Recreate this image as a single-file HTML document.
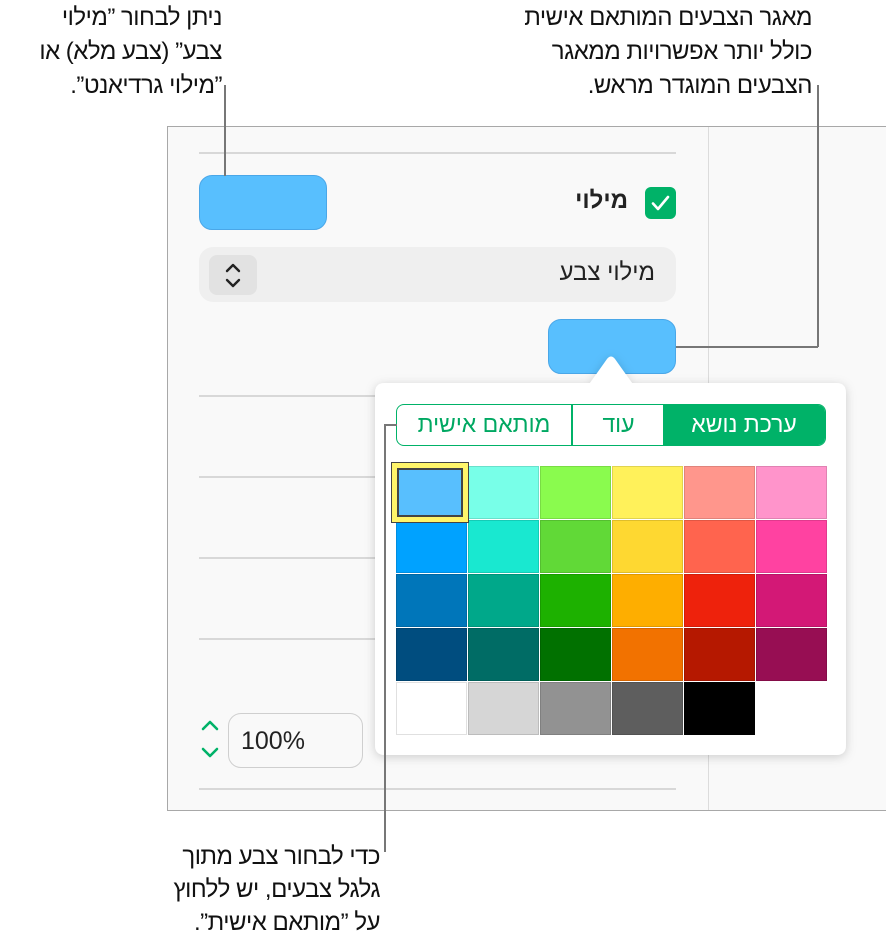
<!DOCTYPE html>
<html><head><meta charset="utf-8"><style>
*{margin:0;padding:0;box-sizing:border-box}
body{width:886px;height:943px;background:#fff;position:relative;overflow:hidden;font-family:"Liberation Sans","Noto Sans CJK SC",sans-serif}
.a{position:absolute}
.cap{position:absolute;direction:rtl;text-align:right;font-size:24px;line-height:34px;color:#111;white-space:nowrap;letter-spacing:-0.5px}
.hl{position:absolute;height:2px;background:#d8d8d8}
.ln{position:absolute;background:#777}
.sw{position:absolute;width:71px;height:53px;border:1px solid rgba(0,0,0,0.12)}
</style></head><body>
<div class="cap" style="right:664px;top:1px">ניתן לבחור ”מילוי<br>צבע” (צבע מלא) או<br>”מילוי גרדיאנט”.</div>
<div class="cap" style="right:74px;top:1px">מאגר הצבעים המותאם אישית<br>כולל יותר אפשרויות ממאגר<br>הצבעים המוגדר מראש.</div>
<div class="cap" style="right:506px;top:840px;line-height:33px">כדי לבחור צבע מתוך<br>גלגל צבעים, יש ללחוץ<br>על ”מותאם אישית”.</div>

<div class="a" style="left:167px;top:126px;width:730px;height:685px;border:1px solid #a8a8a8;background:#f9f9f9"></div>
<div class="a" style="left:708px;top:127px;width:1px;height:683px;background:#dcdcdc"></div>
<div class="hl" style="left:199px;top:152px;width:477px"></div>
<div class="hl" style="left:199px;top:395px;width:200px"></div>
<div class="hl" style="left:199px;top:476px;width:200px"></div>
<div class="hl" style="left:199px;top:557px;width:200px"></div>
<div class="hl" style="left:199px;top:638px;width:200px"></div>
<div class="hl" style="left:199px;top:788px;width:477px"></div>

<div class="a" style="left:199px;top:175px;width:128px;height:55px;background:#58bffe;border:1px solid #4aa7e8;border-radius:13px"></div>
<div class="a" style="left:645px;top:187px;width:31px;height:32px;background:#00b268;border-radius:6px"></div>
<svg class="a" style="left:645px;top:187px" width="31" height="32"><path d="M8 16.5l5 5.5 10-12" fill="none" stroke="#fff" stroke-width="2.6" stroke-linecap="round" stroke-linejoin="round"/></svg>
<div class="a" style="left:540px;top:187px;width:88px;direction:rtl;font-weight:bold;font-size:24px;color:#222;text-align:right">מילוי</div>
<div class="a" style="left:199px;top:247px;width:477px;height:55px;background:#efefef;border-radius:14px"></div>
<div class="a" style="left:209px;top:255px;width:48px;height:40px;background:#e2e2e2;border-radius:8px"></div>
<svg class="a" style="left:209px;top:255px" width="48" height="40"><path d="M18 16l6-6 6 6M18 25l6 6 6-6" fill="none" stroke="#222" stroke-width="2.4" stroke-linecap="round" stroke-linejoin="round"/></svg>
<div class="a" style="left:420px;top:259px;width:235px;direction:rtl;font-size:24px;color:#222;text-align:right">מילוי צבע</div>

<div class="a" style="left:548px;top:319px;width:128px;height:55px;background:#58bffe;border:1px solid #4aa7e8;border-radius:13px"></div>

<svg class="a" style="left:360px;top:345px" width="505" height="430">
<defs><filter id="sh" x="-10%" y="-10%" width="120%" height="125%"><feDropShadow dx="0" dy="2" stdDeviation="5" flood-color="#000" flood-opacity="0.18"/></filter></defs>
<path d="M25 38 H230 L247 14 Q251 9 255 14 L272 38 H476 Q486 38 486 48 V400 Q486 410 476 410 H25 Q15 410 15 400 V48 Q15 38 25 38Z" fill="#fff" filter="url(#sh)"/>
</svg>

<div class="a" style="left:396px;top:404px;width:430px;height:42px;border:1.5px solid #00b268;border-radius:8px;overflow:hidden;background:#fff">
<div class="a" style="right:0;top:0;width:162px;height:100%;background:#00b268;color:#fff;font-size:23px;line-height:39px;text-align:center;direction:rtl">ערכת נושא</div>
<div class="a" style="left:174px;top:0;width:1.5px;height:100%;background:#00b268"></div>
<div class="a" style="left:176px;top:0;width:91px;height:100%;color:#00a862;font-size:23px;line-height:39px;text-align:center;direction:rtl">עוד</div>
<div class="a" style="left:0;top:0;width:174px;height:100%;color:#00a862;font-size:23px;line-height:39px;text-align:center;direction:rtl">מותאם אישית</div>
</div>

<div class="sw" style="left:396px;top:466px;background:#58bffe"></div>
<div class="sw" style="left:468px;top:466px;background:#78ffe8"></div>
<div class="sw" style="left:540px;top:466px;background:#8afb4e"></div>
<div class="sw" style="left:612px;top:466px;background:#fff15a"></div>
<div class="sw" style="left:684px;top:466px;background:#ff968c"></div>
<div class="sw" style="left:756px;top:466px;background:#ff94cb"></div>
<div class="sw" style="left:396px;top:520px;background:#00a2ff"></div>
<div class="sw" style="left:468px;top:520px;background:#19e8d0"></div>
<div class="sw" style="left:540px;top:520px;background:#61d937"></div>
<div class="sw" style="left:612px;top:520px;background:#fed831"></div>
<div class="sw" style="left:684px;top:520px;background:#ff644e"></div>
<div class="sw" style="left:756px;top:520px;background:#ff42a1"></div>
<div class="sw" style="left:396px;top:574px;background:#0076ba"></div>
<div class="sw" style="left:468px;top:574px;background:#00a88a"></div>
<div class="sw" style="left:540px;top:574px;background:#1db100"></div>
<div class="sw" style="left:612px;top:574px;background:#feae00"></div>
<div class="sw" style="left:684px;top:574px;background:#ee220c"></div>
<div class="sw" style="left:756px;top:574px;background:#d31876"></div>
<div class="sw" style="left:396px;top:628px;background:#004d7f"></div>
<div class="sw" style="left:468px;top:628px;background:#006c65"></div>
<div class="sw" style="left:540px;top:628px;background:#017100"></div>
<div class="sw" style="left:612px;top:628px;background:#f27200"></div>
<div class="sw" style="left:684px;top:628px;background:#b51800"></div>
<div class="sw" style="left:756px;top:628px;background:#970e53"></div>
<div class="sw" style="left:396px;top:682px;background:#fff"></div>
<div class="sw" style="left:468px;top:682px;background:#d6d6d6"></div>
<div class="sw" style="left:540px;top:682px;background:#929292"></div>
<div class="sw" style="left:612px;top:682px;background:#5e5e5e"></div>
<div class="sw" style="left:684px;top:682px;background:#000"></div>

<div class="a" style="left:391px;top:462px;width:78px;height:61px;border:1px solid #444;background:#fff56a"></div>
<div class="a" style="left:397px;top:468px;width:66px;height:49px;border:2px solid #444;background:#58bffe"></div>

<svg class="a" style="left:199px;top:715px" width="24" height="48"><path d="M4 14l7-7 7 7M4 34l7 7 7-7" fill="none" stroke="#00b268" stroke-width="2.6" stroke-linecap="round" stroke-linejoin="round"/></svg>
<div class="a" style="left:228px;top:713px;width:135px;height:55px;border:1.5px solid #cfcfcf;border-radius:13px;background:#f9f9f9;font-size:25px;line-height:55px;padding-left:12px;color:#222">100%</div>

<div class="ln" style="left:224px;top:85px;width:1.5px;height:91px"></div>
<div class="ln" style="left:817px;top:85px;width:1.5px;height:262px"></div>
<div class="ln" style="left:676px;top:346px;width:142px;height:1.5px"></div>
<div class="ln" style="left:384px;top:424px;width:1.5px;height:428px"></div>
<div class="ln" style="left:384px;top:424px;width:13px;height:1.5px"></div>
</body></html>
